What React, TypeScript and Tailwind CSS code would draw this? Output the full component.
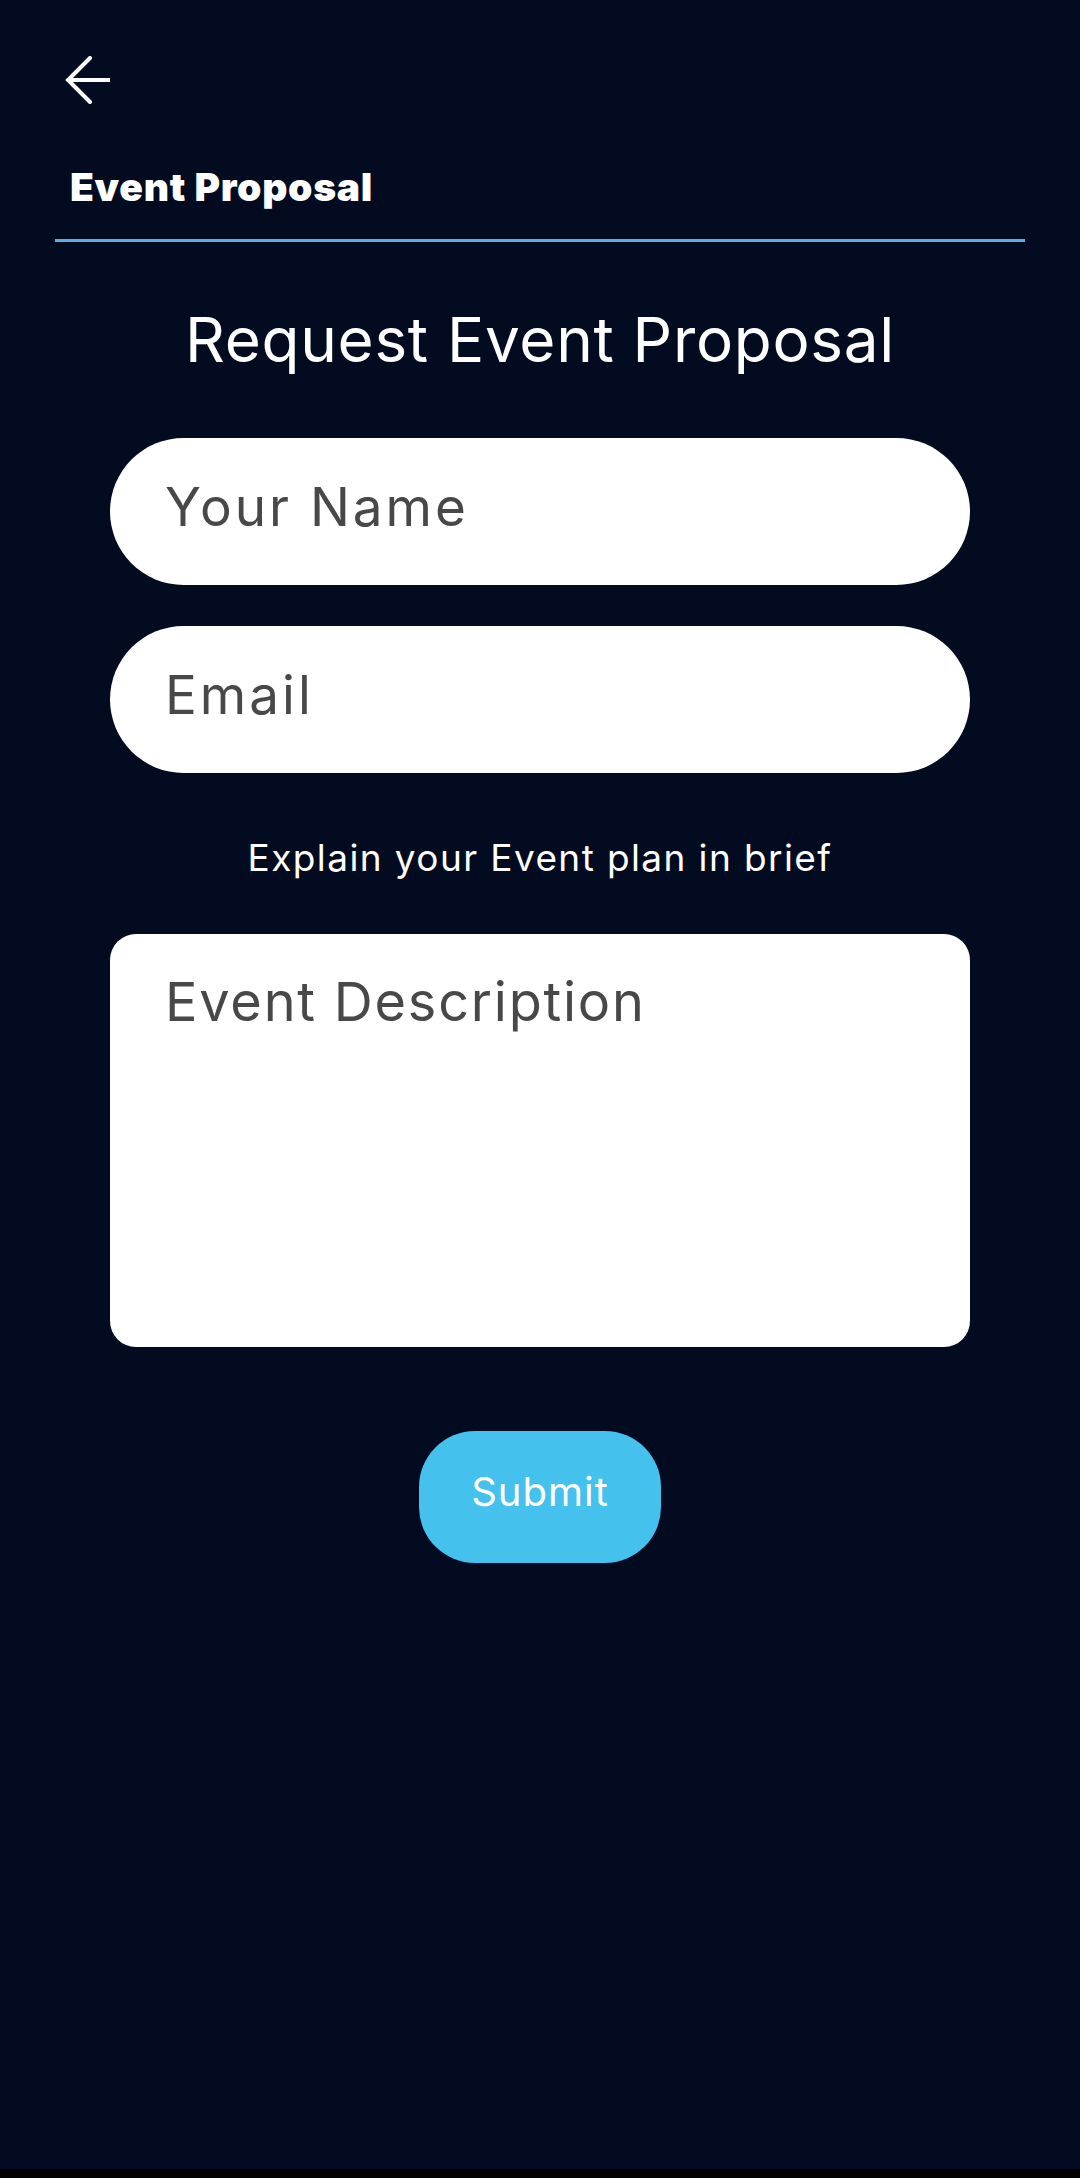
export default function App() {
  return (
    <div className="min-h-[2178px] bg-black">
      <main
        className="h-[2169px] bg-[#020b1f] flex flex-col text-white"
        style={{ fontFamily: "Inter, 'Noto Sans', sans-serif" }}
      >
        <button type="button" className="ml-[65px] mt-[56px] w-[48px] h-[48px]">
          <svg viewBox="0 0 48 48" width="48" height="48" fill="none" stroke="white" strokeWidth="4">
            <path d="M25 2 L3 24 L25 46" strokeLinecap="round" strokeLinejoin="miter" />
            <path d="M3 24 H45" />
          </svg>
        </button>

        <h2 className="ml-[70px] mt-[63px] text-[39px] leading-none font-black tracking-[0.7px]">
          Event Proposal
        </h2>
        <div className="mx-[55px] mt-[33px] h-[3px] bg-[#58b0e2]" />

        <h1 className="mt-[67px] text-center text-[62px] leading-none font-normal tracking-[0.7px]">
          Request Event Proposal
        </h1>

        <form className="flex flex-col items-center">
          <input
            placeholder="Your Name"
            className="mt-[67px] w-[860px] h-[147px] rounded-full bg-white pl-[55px] pb-[10px] text-[53px] tracking-[3px] text-[#333] placeholder:text-[#484848] outline-none"
          />
          <input
            placeholder="Email"
            className="mt-[41px] w-[860px] h-[147px] rounded-full bg-white pl-[55px] pb-[10px] text-[53px] tracking-[3px] text-[#333] placeholder:text-[#484848] outline-none"
          />

          <p className="mt-[66px] text-[37px] leading-none tracking-[1.4px]">
            Explain your Event plan in brief
          </p>

          <textarea
            placeholder="Event Description"
            className="mt-[58px] w-[860px] h-[413px] rounded-[26px] bg-white px-[55px] pt-[41px] text-[54px] leading-none tracking-[1.8px] text-[#333] placeholder:text-[#484848] outline-none resize-none"
          />

          <button
            type="button"
            className="mt-[84px] w-[242px] h-[132px] rounded-[56px] bg-[#44c1ed] pb-[10px] text-[40px] tracking-[1px] text-white"
          >
            Submit
          </button>
        </form>
      </main>
    </div>
  );
}
